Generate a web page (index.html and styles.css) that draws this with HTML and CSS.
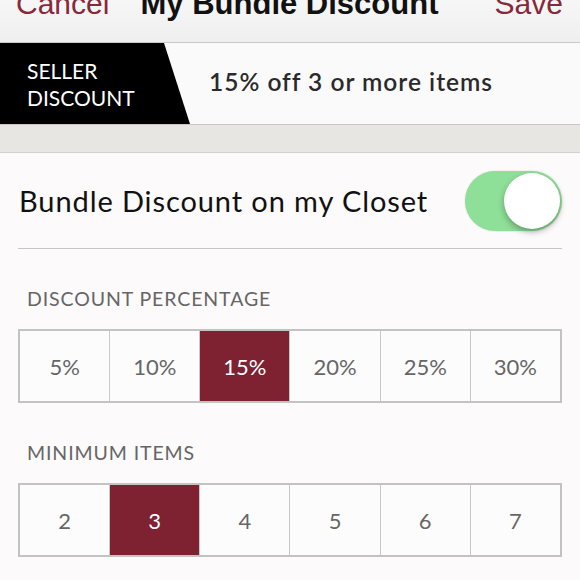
FILE: index.html
```html
<!DOCTYPE html>
<html lang="en">
<head>
  <meta charset="UTF-8" />
  <meta name="viewport" content="width=device-width, initial-scale=1.0" />
  <title>My Bundle Discount</title>
  <link rel="stylesheet" href="styles.css">
</head>
<body>
  <header class="nav">
    <span class="nav-btn">Cancel</span>
    <span class="nav-title">My Bundle Discount</span>
    <span class="nav-btn nav-right">Save</span>
  </header>

  <div class="banner">
    <div class="tag">SELLER<br>DISCOUNT</div>
    <div class="offer">15% off 3 or more items</div>
  </div>
  <div class="band"></div>

  <main class="content">
    <div class="toggle-row">
      <span class="toggle-label">Bundle Discount on my Closet</span>
      <div class="switch on"><div class="knob"></div></div>
    </div>

    <h2 class="section-label">DISCOUNT PERCENTAGE</h2>
    <div class="segments">
      <div class="seg">5%</div>
      <div class="seg">10%</div>
      <div class="seg active">15%</div>
      <div class="seg">20%</div>
      <div class="seg">25%</div>
      <div class="seg">30%</div>
    </div>

    <h2 class="section-label">MINIMUM ITEMS</h2>
    <div class="segments">
      <div class="seg">2</div>
      <div class="seg active">3</div>
      <div class="seg">4</div>
      <div class="seg">5</div>
      <div class="seg">6</div>
      <div class="seg">7</div>
    </div>
  </main>
</body>
</html>
```

FILE: styles.css
```css
body {
  margin: 0;
  background-color: #fcfafa;
  font-family: "Lato", "Liberation Sans", sans-serif;
}
.nav {
  height: 43px;
  box-sizing: border-box;
  padding: 0 17px 0 16px;
  display: grid;
  grid-template-columns: 1fr auto 1fr;
  align-items: start;
  background: linear-gradient(#f7f6f6, #f0efef);
  border-bottom: 1px solid #c9c9c9;
  font-family: "Liberation Sans", Arial, sans-serif;
}
.nav-btn {
  font-size: 30px;
  line-height: 7px;
  color: #86293a;
}
.nav-right {
  text-align: right;
}
.nav-title {
  font-size: 31px;
  line-height: 7px;
  font-weight: bold;
  color: #111;
}
.banner {
  height: 81px;
  display: flex;
  align-items: center;
  background-color: #fbfafa;
  border-bottom: 1px solid #c6c6c6;
}
.tag {
  width: 190px;
  height: 81px;
  box-sizing: border-box;
  padding: 14px 0 0 27px;
  background-color: #000;
  clip-path: polygon(0 0, 164px 0, 190px 100%, 0 100%);
  color: #fff;
  font-size: 21px;
  line-height: 27px;
}
.offer {
  margin: 0 0 5px 19px;
  font-size: 24.5px;
  font-weight: 600;
  letter-spacing: 1px;
  color: #2a2a2a;
}
.band {
  height: 27px;
  background-color: #e8e6e2;
  border-bottom: 1px solid #cfcfcf;
}
.content {
  padding: 0 18px;
}
.toggle-row {
  height: 95px;
  display: flex;
  align-items: center;
  justify-content: space-between;
  border-bottom: 1px solid #c6c6c6;
}
.toggle-label {
  margin-left: 1px;
  font-size: 29px;
  letter-spacing: 0.9px;
  color: #111;
}
.switch {
  width: 97px;
  height: 60px;
  box-sizing: border-box;
  padding: 2px;
  border-radius: 30px;
  display: flex;
  justify-content: flex-end;
  background-color: #8edf98;
  box-shadow: 0 0 2px rgba(0, 0, 0, 0.15);
}
.knob {
  width: 56px;
  height: 56px;
  border-radius: 50%;
  background-color: #fff;
  box-shadow: 0 3px 6px rgba(0, 0, 0, 0.3);
}
.section-label {
  margin: 38px 0 18px 9px;
  font-size: 19.5px;
  line-height: 24px;
  font-weight: normal;
  letter-spacing: 0.9px;
  color: #666;
}
.segments {
  display: grid;
  grid-template-columns: repeat(6, 1fr);
  gap: 1px;
  height: 74px;
  box-sizing: border-box;
  border: 2px solid #c3c3c3;
  background-color: #c8c8c8;
}
.seg {
  display: flex;
  align-items: center;
  justify-content: center;
  background-color: #fdfcfc;
  font-size: 22px;
  color: #666;
}
.seg.active {
  background-color: #7e2131;
  color: #fff;
}
```
